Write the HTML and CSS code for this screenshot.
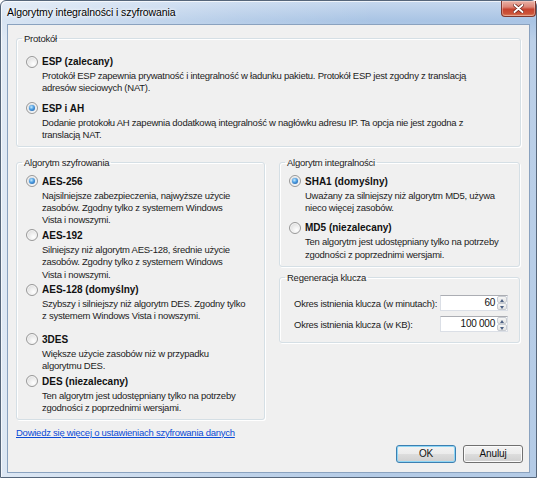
FILE: index.html
```html
<!DOCTYPE html>
<html lang="pl">
<head>
<meta charset="utf-8">
<title>Algorytmy integralności i szyfrowania</title>
<link rel="stylesheet" href="styles.css">
</head>
<body>
<div class="window">
  <div class="titlebar">
    <span class="title">Algorytmy integralności i szyfrowania</span>
    <button class="close" aria-label="Zamknij">
      <svg width="11" height="9" viewBox="0 0 11 9">
        <path d="M1.5 1 L9.5 8 M9.5 1 L1.5 8" stroke="#6a2219" stroke-width="3.4" stroke-linecap="round"/>
        <path d="M1.5 1 L9.5 8 M9.5 1 L1.5 8" stroke="#ffffff" stroke-width="1.9" stroke-linecap="round"/>
      </svg>
    </button>
  </div>

  <div class="client">
    <div class="groups">
      <fieldset class="group protocol">
        <legend>Protokół</legend>
        <div class="group-body">
          <div class="option">
            <span class="radio"></span>
            <div class="opt-title">ESP (zalecany)</div>
            <div class="opt-desc">Protokół ESP zapewnia prywatność i integralność w ładunku pakietu. Protokół ESP jest zgodny z translacją<br>adresów sieciowych (NAT).</div>
          </div>
          <div class="option">
            <span class="radio checked"></span>
            <div class="opt-title">ESP i AH</div>
            <div class="opt-desc">Dodanie protokołu AH zapewnia dodatkową integralność w nagłówku adresu IP. Ta opcja nie jest zgodna z<br>translacją NAT.</div>
          </div>
        </div>
      </fieldset>

      <div class="columns">
        <fieldset class="group enc">
          <legend>Algorytm szyfrowania</legend>
          <div class="group-body">
            <div class="option">
              <span class="radio checked"></span>
              <div class="opt-title">AES-256</div>
              <div class="opt-desc">Najsilniejsze zabezpieczenia, najwyższe użycie<br>zasobów. Zgodny tylko z systemem Windows<br>Vista i nowszymi.</div>
            </div>
            <div class="option">
              <span class="radio"></span>
              <div class="opt-title">AES-192</div>
              <div class="opt-desc">Silniejszy niż algorytm AES-128, średnie użycie<br>zasobów. Zgodny tylko z systemem Windows<br>Vista i nowszymi.</div>
            </div>
            <div class="option spaced">
              <span class="radio"></span>
              <div class="opt-title">AES-128 (domyślny)</div>
              <div class="opt-desc">Szybszy i silniejszy niż algorytm DES. Zgodny tylko<br>z systemem Windows Vista i nowszymi.</div>
            </div>
            <div class="option">
              <span class="radio"></span>
              <div class="opt-title">3DES</div>
              <div class="opt-desc">Większe użycie zasobów niż w przypadku<br>algorytmu DES.</div>
            </div>
            <div class="option">
              <span class="radio"></span>
              <div class="opt-title">DES (niezalecany)</div>
              <div class="opt-desc">Ten algorytm jest udostępniany tylko na potrzeby<br>zgodności z poprzednimi wersjami.</div>
            </div>
          </div>
        </fieldset>

        <div class="side">
          <fieldset class="group integ">
            <legend>Algorytm integralności</legend>
            <div class="group-body">
              <div class="option">
                <span class="radio checked"></span>
                <div class="opt-title">SHA1 (domyślny)</div>
                <div class="opt-desc">Uważany za silniejszy niż algorytm MD5, używa<br>nieco więcej zasobów.</div>
              </div>
              <div class="option">
                <span class="radio"></span>
                <div class="opt-title">MD5 (niezalecany)</div>
                <div class="opt-desc">Ten algorytm jest udostępniany tylko na potrzeby<br>zgodności z poprzednimi wersjami.</div>
              </div>
            </div>
          </fieldset>

          <fieldset class="group regen">
            <legend>Regeneracja klucza</legend>
            <div class="group-body">
              <div class="field-row">
                <span class="field-label">Okres istnienia klucza (w minutach):</span>
                <div class="spin">
                  <span class="spin-value">60</span>
                  <span class="spin-buttons"><span class="spin-btn up"></span><span class="spin-btn down"></span></span>
                </div>
              </div>
              <div class="field-row">
                <span class="field-label">Okres istnienia klucza (w KB):</span>
                <div class="spin">
                  <span class="spin-value">100 000</span>
                  <span class="spin-buttons"><span class="spin-btn up"></span><span class="spin-btn down"></span></span>
                </div>
              </div>
            </div>
          </fieldset>
        </div>
      </div>
    </div>

    <a class="help-link" href="#">Dowiedz się więcej o ustawieniach szyfrowania danych</a>

    <div class="buttons">
      <button class="btn default">OK</button>
      <button class="btn">Anuluj</button>
    </div>
  </div>
</div>
</body>
</html>
```

FILE: styles.css
```css
html, body {
  margin: 0;
  padding: 0;
}

body {
  width: 537px;
  height: 478px;
  overflow: hidden;
  font-family: "Liberation Sans", Arial, sans-serif;
  font-size: 9.5px;
  letter-spacing: -0.25px;
  color: #1c1c1c;
}

/* window frame with Aero-like glass */
.window {
  box-sizing: border-box;
  width: 537px;
  height: 478px;
  border: 1px solid #56667a;
  border-radius: 6px 6px 0 0;
  display: flex;
  flex-direction: column;
  background:
    linear-gradient(to right, rgba(255, 255, 255, 0.55) 0, rgba(255, 255, 255, 0.15) 45%, rgba(255, 255, 255, 0) 70%),
    linear-gradient(to bottom, #c6d8ee 0, #a9c4e4 20px, #bcd0e8 40px, #b4cbe6 100%);
  box-shadow: inset 1px 1px 0 rgba(255, 255, 255, 0.7);
}

.titlebar {
  flex: none;
  height: 23px;
  display: flex;
  align-items: flex-start;
}

.title {
  padding: 5px 0 0 6px;
  font-size: 10.5px;
  line-height: 13px;
  letter-spacing: -0.1px;
  color: #000;
  text-shadow: 0 0 5px #fff, 0 0 3px #fff;
}

.close {
  margin-left: auto;
  margin-right: 0;
  width: 35px;
  height: 16px;
  padding: 0;
  border: 1px solid #80372d;
  border-top: none;
  border-radius: 0 0 4px 4px;
  background: linear-gradient(to bottom, #eab2a6 0, #dc8576 40%, #c7432f 55%, #cc5439 85%, #e08a6a 100%);
  box-shadow: inset 0 0 0 1px rgba(255, 235, 230, 0.35);
  display: flex;
  align-items: center;
  justify-content: center;
}

.close svg {
  display: block;
  margin-top: -1px;
}

/* client area */
.client {
  flex: 1;
  margin: 0 6px 4px;
  border: 1px solid #8aa2bf;
  background: #f0f0f0;
  padding: 8px 6px 0 8px;
  display: flex;
  flex-direction: column;
}

.groups {
  margin-right: 2px;
}

.group {
  margin: 0;
  padding: 0;
  min-width: 0;
  border: 1px solid #d5dfe5;
  border-radius: 3px;
  box-shadow: inset 1px 1px 0 #fff, 1px 1px 0 #fff;
}

.group legend {
  margin-left: 5px;
  padding: 0 2px;
  line-height: 11px;
  color: #1c1c1c;
}

.group-body {
  padding: 9px 9px 5px 9px;
}

.protocol .group-body {
  padding-top: 9px;
  padding-bottom: 4px;
  display: flex;
  flex-direction: column;
  gap: 5px;
}

.columns {
  margin-top: 10px;
  display: grid;
  grid-template-columns: 249px 241px;
  column-gap: 14px;
}

.enc .group-body {
  padding-top: 5px;
  padding-bottom: 4px;
}

.enc .option.spaced {
  margin-bottom: 8px;
}

.side {
  display: flex;
  flex-direction: column;
  gap: 5px;
}

.integ .group-body {
  padding-top: 5px;
  padding-bottom: 5px;
  display: flex;
  flex-direction: column;
  gap: 5px;
}

/* radio option: button + bold caption + description */
.option {
  display: grid;
  grid-template-columns: 12px 1fr;
  column-gap: 4px;
}

.radio {
  position: relative;
  box-sizing: border-box;
  width: 12px;
  height: 12px;
  margin-top: 2.5px;
  border-radius: 50%;
  border: 1px solid #999;
  background: radial-gradient(circle at 65% 70%, #ffffff 0, #ececec 45%, #d2d2d2 100%);
  box-shadow: inset 0 0 0 1px #f6f6f6;
}

.radio.checked::after {
  content: "";
  position: absolute;
  left: 2px;
  top: 2px;
  width: 6px;
  height: 6px;
  border-radius: 50%;
  background: radial-gradient(circle at 40% 35%, #c6ecff 0, #4a9be0 45%, #1b4f94 100%);
  box-shadow: 0 0 1px #6aa2d6;
}

.opt-title {
  font-weight: bold;
  font-size: 10px;
  letter-spacing: 0;
  line-height: 17px;
  color: #111;
}

.opt-desc {
  grid-column: 2;
  line-height: 12.4px;
}

/* key regeneration fields */
.regen .group-body {
  padding: 12px 11px 10px 14px;
  display: flex;
  flex-direction: column;
  gap: 5px;
}

.field-row {
  display: flex;
  align-items: center;
  justify-content: space-between;
}

.spin {
  display: flex;
  height: 16px;
}

.spin-value {
  box-sizing: border-box;
  width: 57px;
  height: 16px;
  padding-right: 2px;
  line-height: 14px;
  text-align: right;
  background: #fff;
  border: 1px solid #dbdfe6;
  border-top-color: #abadb3;
  border-right: none;
  color: #111;
  font-size: 10px;
}

.spin-buttons {
  box-sizing: border-box;
  width: 11px;
  height: 16px;
  display: flex;
  flex-direction: column;
  background: #fff;
  border: 1px solid #dbdfe6;
  border-top-color: #abadb3;
  border-left: none;
}

.spin-btn {
  flex: 1;
  position: relative;
  border: 1px solid #c8ccd2;
  border-radius: 2px;
  background: linear-gradient(#f6f6f6, #e4e4e4);
}

.spin-btn::after {
  content: "";
  position: absolute;
  left: 2px;
  top: 2px;
  border-left: 2.5px solid transparent;
  border-right: 2.5px solid transparent;
}

.spin-btn.up::after {
  border-bottom: 3px solid #4d6185;
}

.spin-btn.down::after {
  border-top: 3px solid #4d6185;
}

/* footer */
.help-link {
  align-self: flex-start;
  margin-top: 7px;
  line-height: 12px;
  color: #0b4bd6;
  text-decoration: underline;
}

.buttons {
  margin-top: 6px;
  display: flex;
  justify-content: flex-end;
  gap: 7px;
}

.btn {
  box-sizing: border-box;
  width: 60px;
  height: 18px;
  padding: 0;
  border: 1px solid #707070;
  border-radius: 3px;
  background: linear-gradient(#f3f3f3 0, #ebebeb 50%, #dddddd 50%, #cfcfcf 100%);
  box-shadow: inset 0 0 0 1px #fbfbfb;
  font-family: "Liberation Sans", Arial, sans-serif;
  font-size: 10px;
  letter-spacing: -0.1px;
  color: #111;
}

.btn.default {
  border-color: #3c7fb1;
  box-shadow: inset 0 0 0 1px #8fd6f5;
}
```
